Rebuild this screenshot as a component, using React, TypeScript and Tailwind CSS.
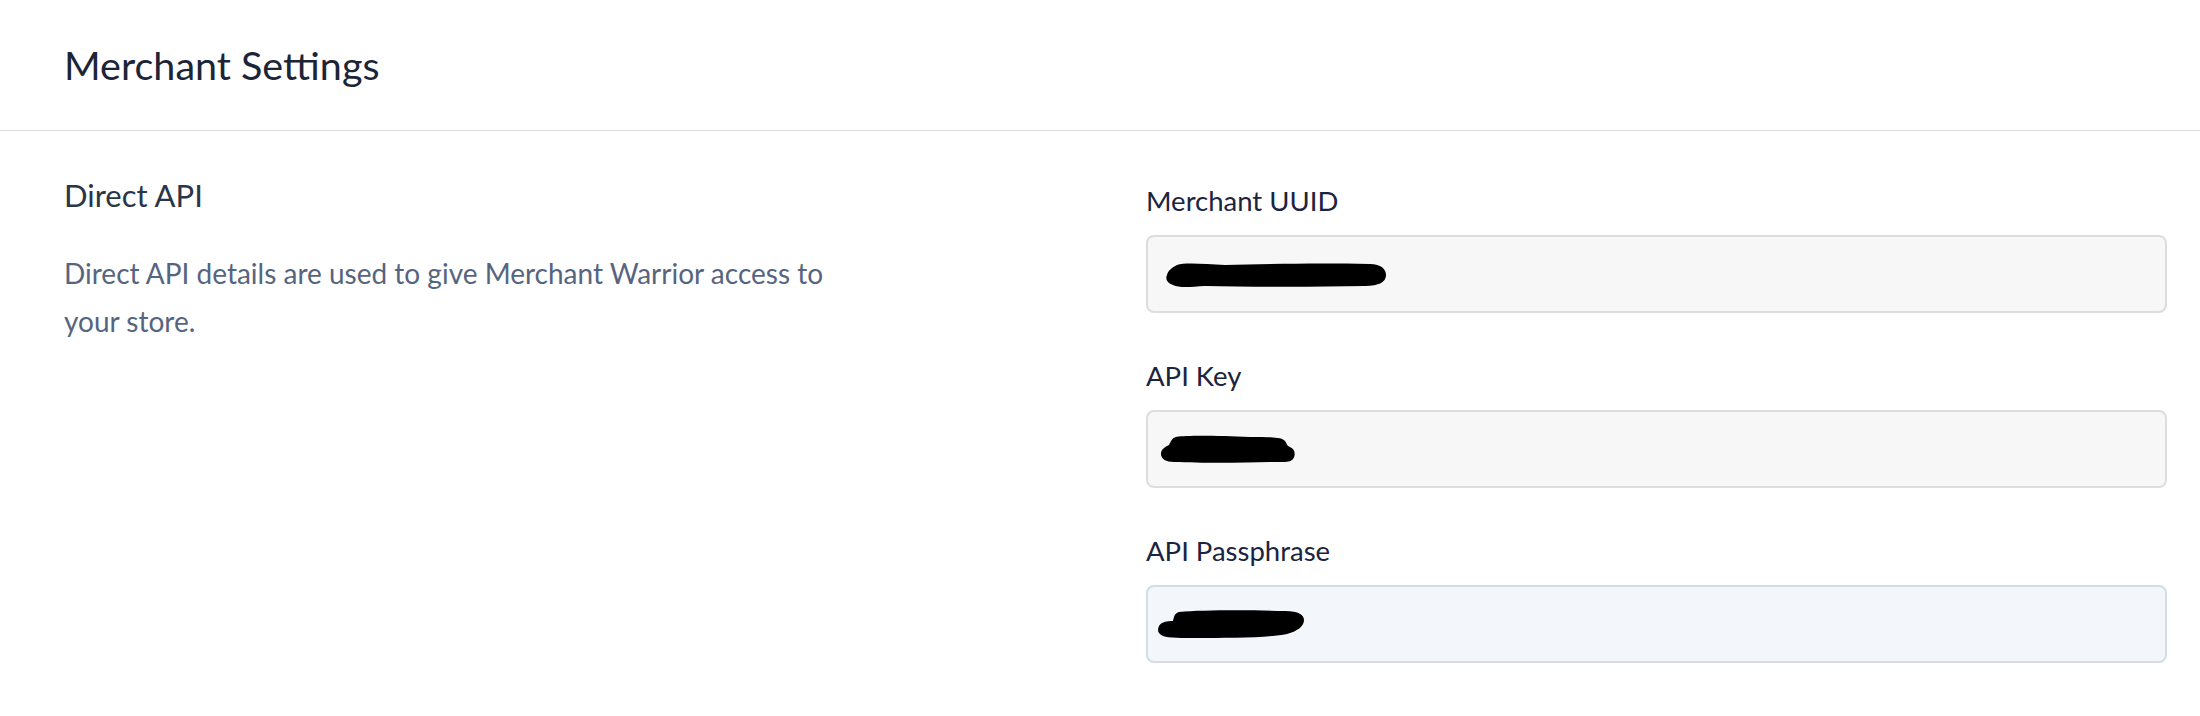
import React from 'react'

const font = { fontFamily: 'Lato, "Open Sans", sans-serif' }

function Blob({ variant }: { variant: 1 | 2 | 3 }) {
  if (variant === 1) {
    return (
      <svg width="222" height="28" viewBox="0 0 222 28" className="block">
        <path
          d="M12 4 C 20 1, 40 3, 60 4 C 100 3, 150 2, 205 3 C 216 3, 221 8, 221 14 C 221 21, 214 25, 200 25 C 150 26, 90 26, 40 25 C 25 26, 14 27, 8 24 C 2 22, 0 18, 2 14 C 3 10, 6 7, 12 4 Z"
          fill="#000"
        />
      </svg>
    )
  }
  if (variant === 2) {
    return (
      <svg width="136" height="29" viewBox="0 0 136 29" className="block">
        <path
          d="M16 2 C 30 0, 60 1, 90 2 C 110 2, 122 2, 125 6 C 127 9, 127 11, 130 12 C 135 14, 136 20, 133 24 C 130 28, 122 27, 110 27 C 80 28, 40 28, 14 27 C 6 27, 1 24, 1 19 C 1 14, 5 12, 9 10 C 11 6, 12 3, 16 2 Z"
          fill="#000"
        />
      </svg>
    )
  }
  return (
    <svg width="148" height="30" viewBox="0 0 148 30" className="block">
      <path
        d="M22 3 C 45 1, 90 1, 128 2 C 142 2, 147 6, 147 11 C 147 17, 141 22, 130 25 C 110 29, 70 29, 40 29 C 25 29, 12 29, 6 27 C 1 25, 0 21, 2 17 C 4 13, 10 12, 16 12 C 17 7, 18 4, 22 3 Z"
        fill="#000"
      />
    </svg>
  )
}

function Field({
  label,
  variant,
  focused,
  pad,
}: {
  label: string
  variant: 1 | 2 | 3
  focused?: boolean
  pad: string
}) {
  return (
    <div className="mb-[43px]">
      <label className="block h-[40px] leading-[40px] text-[27.5px] text-[#1b2440] mb-[14px]">{label}</label>
      <div
        className={
          focused
            ? 'h-[78px] rounded-[8px] border-2 border-[#d3dce7] bg-[#f3f6fb] flex items-center'
            : 'h-[78px] rounded-[8px] border-2 border-[#dddddd] bg-[#f7f7f7] flex items-center'
        }
      >
        <div className={pad}>
          <Blob variant={variant} />
        </div>
      </div>
    </div>
  )
}

export default function App() {
  return (
    <div className="w-[2200px] h-[716px] bg-white overflow-hidden" style={font}>
      <header className="h-[131px] px-[64px] flex items-center border-b border-[#dcdcdc]">
        <h1 className="text-[39.5px] text-[#1c2536] leading-none">Merchant Settings</h1>
      </header>

      <div className="grid grid-cols-[1082px_1fr] pl-[64px] pr-[33px]">
        <div className="pt-[44px]">
          <h2 className="h-[40px] leading-[40px] text-[31px] text-[#2a3548]">Direct API</h2>
          <p className="mt-[34px] max-w-[820px] text-[28px] leading-[48px] text-[#56657f]">
            Direct API details are used to give Merchant Warrior access to your store.
          </p>
        </div>

        <div className="pt-[50px]">
          <Field label="Merchant UUID" variant={1} pad="pl-[17px] pt-[1px]" />
          <Field label="API Key" variant={2} pad="pl-[12px] pt-[0px]" />
          <Field label="API Passphrase" variant={3} focused pad="pl-[9px] pt-[0px]" />
        </div>
      </div>
    </div>
  )
}
